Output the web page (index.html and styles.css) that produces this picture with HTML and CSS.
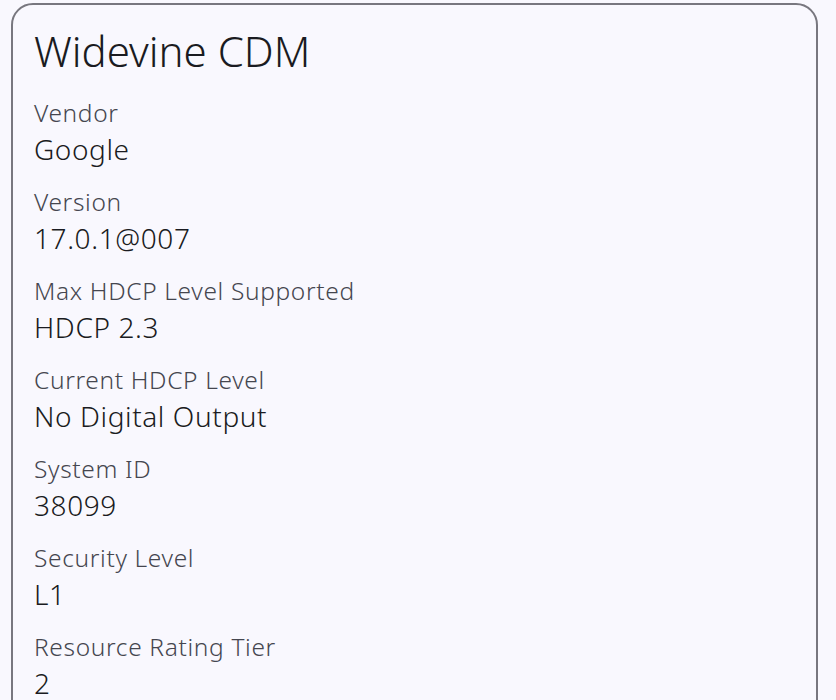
FILE: index.html
```html
<!DOCTYPE html>
<html>
<head>
<meta charset="utf-8">
<link rel="stylesheet" href="styles.css">
</head>
<body>
<div class="card">
  <h1 class="title">Widevine CDM</h1>
  <div class="item"><div class="label">Vendor</div><div class="value">Google</div></div>
  <div class="item"><div class="label">Version</div><div class="value">17.0.1@007</div></div>
  <div class="item"><div class="label">Max HDCP Level Supported</div><div class="value">HDCP 2.3</div></div>
  <div class="item"><div class="label">Current HDCP Level</div><div class="value">No Digital Output</div></div>
  <div class="item"><div class="label">System ID</div><div class="value">38099</div></div>
  <div class="item"><div class="label">Security Level</div><div class="value">L1</div></div>
  <div class="item"><div class="label">Resource Rating Tier</div><div class="value">2</div></div>
</div>
</body>
</html>
```
FILE: styles.css
```css
html, body {
  margin: 0;
  padding: 0;
  background: #f9f8fe;
  font-family: "Noto Sans", sans-serif;
  font-weight: 350;
  overflow: hidden;
}
.card {
  margin: 3px 18px 0 11px;
  border: 2px solid #78777f;
  border-radius: 22px;
  padding: 21px 21px 40px 21px;
  min-height: 800px;
  box-sizing: border-box;
}
.title {
  margin: 0 0 20px 0;
  font-size: 42px;
  font-weight: 350;
  line-height: 50px;
  color: #1a1b21;
}
.item {
  display: flex;
  flex-direction: column;
  margin-bottom: 17px;
}
.label {
  font-size: 24.5px;
  line-height: 34px;
  letter-spacing: 0.65px;
  color: #45464f;
}
.value {
  font-size: 28px;
  line-height: 38px;
  letter-spacing: 0.6px;
  color: #1a1b21;
}
```
